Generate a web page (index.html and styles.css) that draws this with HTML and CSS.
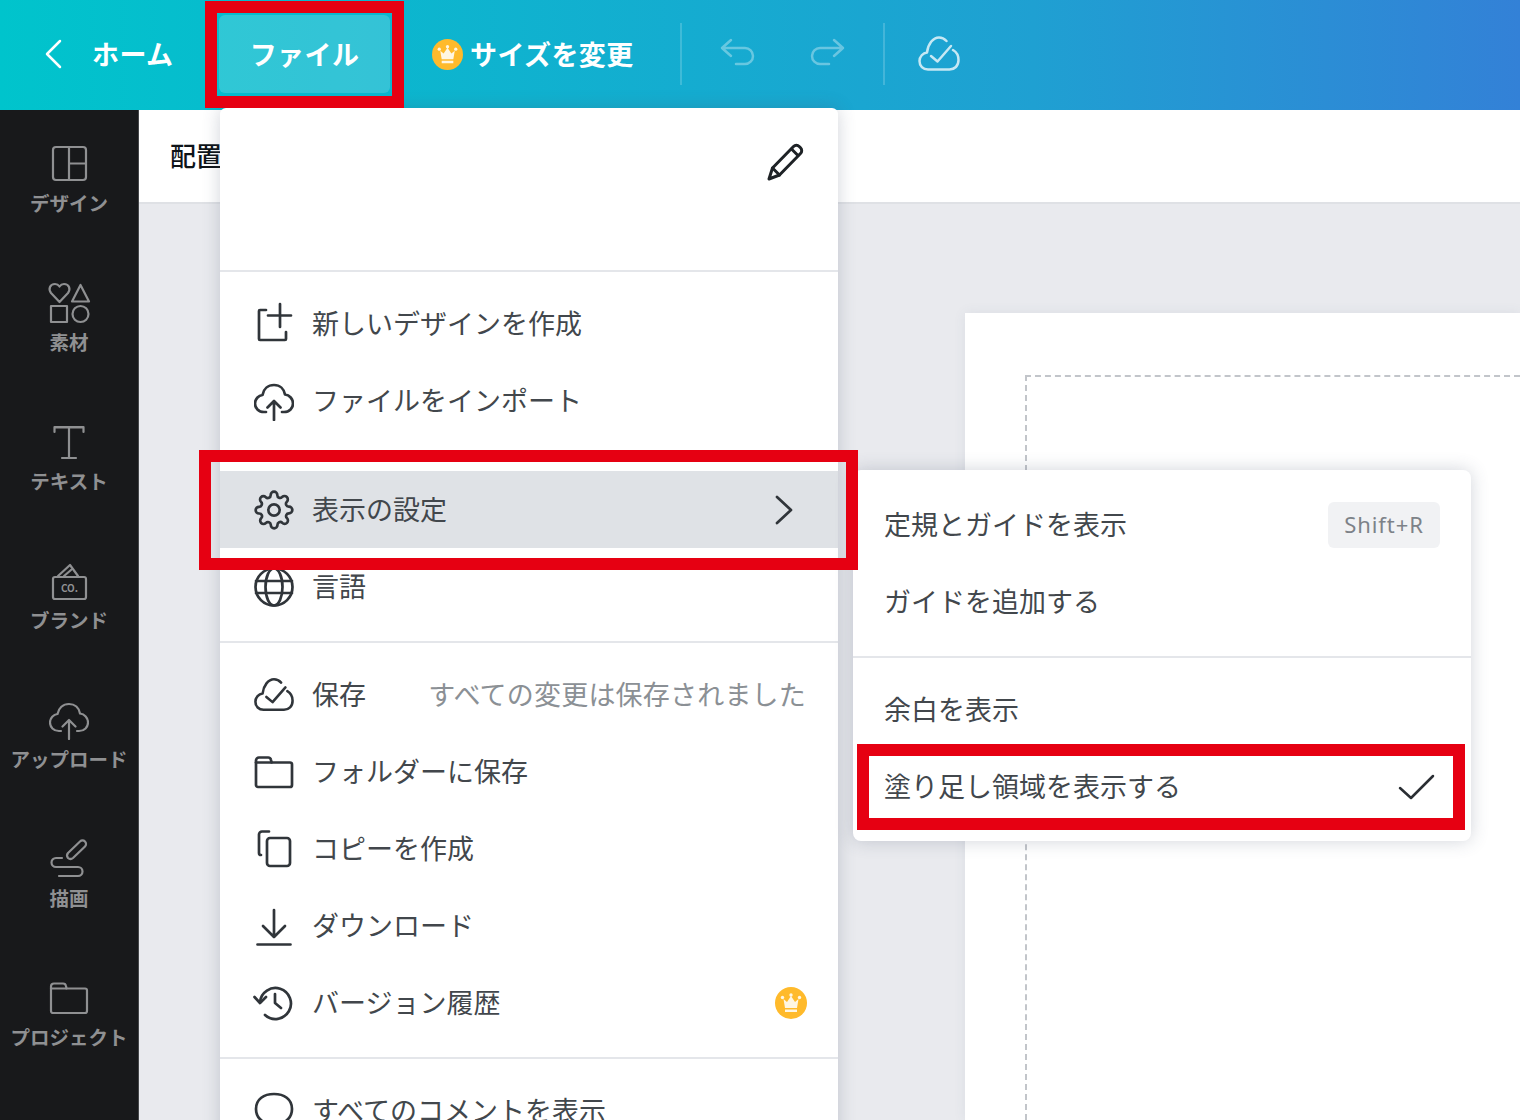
FILE: index.html
```html
<!DOCTYPE html>
<html lang="ja">
<head>
    <meta charset="UTF-8">
    <title>ファイル - 表示の設定</title>
    <link rel="stylesheet" href="styles.css">
</head>
<body>
<svg class="defs" width="0" height="0">
    <symbol id="i-upload" viewBox="0 0 40 40">
        <path d="M12 31H10C4.500 31 1 27 1 22.500C1 18 4.500 14.500 8.500 14C9.500 8 14 4 20 4C26 4 30 8 31 13.500C35.500 14 39 18 39 22.500C39 27 35.500 31 30 31H28"/>
        <path d="M20 39V20M13.500 26.500L20 20L26.500 26.500"/>
    </symbol>
    <symbol id="i-folder" viewBox="0 0 40 40">
        <path d="M2 8.500a3 3 0 0 1 3-3h9a3 3 0 0 1 3 2.500l.5 2.500H36a2 2 0 0 1 2 2V33a2 2 0 0 1-2 2H4a2 2 0 0 1-2-2z"/>
        <path d="M2 10.500h15.500"/>
    </symbol>
    <symbol id="i-cloud" viewBox="0 0 42 40">
        <path d="M28.500 7C26.500 4.800 24 3.500 21 3.500C15 3.500 10 10 9 18.500C5 19 1.500 22.500 1.500 27C1.500 32 5 35.500 10 35.500H31.500C36.500 35.500 40.500 32 40.500 26C40.500 21.500 38.500 18 35 16"/>
        <path d="M13 22L19.500 27.500L33 12"/>
    </symbol>
    <symbol id="i-crown" viewBox="0 0 32 32">
        <circle class="crown-bg" cx="16" cy="16" r="16"/>
        <path class="crown-fg" d="M8.500 12L12 15L16 9L20 15L23.500 12L22 21H10zM10 22.500H22V25H10z"/>
        <circle class="crown-fg" cx="7.500" cy="10.500" r="1.700"/>
        <circle class="crown-fg" cx="16" cy="8" r="1.700"/>
        <circle class="crown-fg" cx="24.500" cy="10.500" r="1.700"/>
    </symbol>
</svg>

<div class="app">
    <header class="topbar">
        <svg class="ico back" viewBox="0 0 40 40"><path d="M26 7L13 20L26 33"/></svg>
        <span class="home">ホーム</span>
        <button class="file-btn">ファイル</button>
        <svg class="crown resize-crown"><use href="#i-crown"/></svg>
        <span class="resize">サイズを変更</span>
        <span class="vline first"></span>
        <svg class="ico dim undo" viewBox="0 0 40 40"><path d="M12 6L3 14L12 22M3 14H26a8 8 0 0 1 0 16H17"/></svg>
        <svg class="ico dim redo" viewBox="0 0 40 40"><path d="M28 6L37 14L28 22M37 14H14a8 8 0 0 0 0 16H23"/></svg>
        <span class="vline second"></span>
        <svg class="ico soft cloud"><use href="#i-cloud"/></svg>
    </header>

    <div class="body-row">
        <nav class="side">
            <div class="side-item">
                <svg class="ico" viewBox="0 0 40 40"><rect x="4" y="3" width="33" height="33" rx="3"/><path d="M20 3V36M20 19.500H37"/></svg>
                <span>デザイン</span>
            </div>
            <div class="side-item">
                <svg class="ico" viewBox="0 0 40 40">
                    <path d="M10.500 19L2 10C-1 6 1 1 6 1C8 1 9.500 2 10.500 3.500C11.500 2 13 1 15 1C20 1 22 6 19 10z"/>
                    <path d="M31.500 2L40 18.500H23z"/>
                    <rect x="2" y="23" width="16" height="16"/>
                    <circle cx="31.500" cy="31" r="8"/>
                </svg>
                <span>素材</span>
            </div>
            <div class="side-item">
                <svg class="ico" viewBox="0 0 40 40"><path d="M5.500 10V5H34.500V10M5.500 5.500H34.500M20 5V36M13 36H27"/></svg>
                <span>テキスト</span>
            </div>
            <div class="side-item">
                <svg class="ico" viewBox="0 0 40 40">
                    <path d="M9 15L21 4L29 15M15 15L22 9"/>
                    <rect x="4" y="16" width="33" height="22" rx="2"/>
                    <text class="co" x="20.500" y="31">CO.</text>
                </svg>
                <span>ブランド</span>
            </div>
            <div class="side-item">
                <svg class="ico"><use href="#i-upload"/></svg>
                <span>アップロード</span>
            </div>
            <div class="side-item">
                <svg class="ico" viewBox="0 0 40 40">
                    <path d="M19 14L31 2.500a3.500 3.500 0 0 1 5 5L24 19a4 4 0 0 1-5 0a4 4 0 0 1 0-5z"/>
                    <path d="M13 19H7a4 4 0 0 0 0 9H29a4 4 0 0 1 0 9H10"/>
                </svg>
                <span>描画</span>
            </div>
            <div class="side-item">
                <svg class="ico"><use href="#i-folder"/></svg>
                <span>プロジェクト</span>
            </div>
        </nav>

        <main class="main">
            <div class="toolbar">配置</div>
            <div class="canvas">
                <div class="page"><div class="guide"></div></div>
            </div>
        </main>
    </div>

    <!-- ファイルメニュー -->
    <div class="menu">
        <div class="menu-head">
            <svg class="ico dark pencil" viewBox="0 0 40 40">
                <path d="M3 38L6.500 27L27.500 5.500a4 4 0 0 1 5.700 0l1.300 1.300a4 4 0 0 1 0 5.700L13.500 34z"/>
                <path d="M6.500 27L13.500 34M25.500 8L32 14.500"/>
            </svg>
        </div>
        <div class="section">
            <div class="row">
                <svg class="ico" viewBox="0 0 40 40"><path d="M12 6H6a1 1 0 0 0-1 1V35a1 1 0 0 0 1 1H31a1 1 0 0 0 1-1V28M26 0V23M14 11.500H37"/></svg>
                <span>新しいデザインを作成</span>
            </div>
            <div class="row">
                <svg class="ico"><use href="#i-upload"/></svg>
                <span>ファイルをインポート</span>
            </div>
            <div class="row active gap-top">
                <svg class="ico" viewBox="0 0 24 24">
                    <circle cx="12" cy="12" r="3.400" class="thin"/>
                    <path class="thin" d="M19.400 15a1.650 1.650 0 0 0 .33 1.820l.06.06a2 2 0 0 1 0 2.830 2 2 0 0 1-2.830 0l-.06-.06a1.650 1.650 0 0 0-1.820-.33 1.650 1.650 0 0 0-1 1.510V21a2 2 0 0 1-2 2 2 2 0 0 1-2-2v-.09A1.650 1.650 0 0 0 9 19.400a1.650 1.650 0 0 0-1.820.33l-.06.06a2 2 0 0 1-2.830 0 2 2 0 0 1 0-2.830l.06-.06a1.650 1.650 0 0 0 .33-1.820 1.650 1.650 0 0 0-1.510-1H3a2 2 0 0 1-2-2 2 2 0 0 1 2-2h.09A1.650 1.650 0 0 0 4.600 9a1.650 1.650 0 0 0-.33-1.820l-.06-.06a2 2 0 0 1 0-2.830 2 2 0 0 1 2.830 0l.06.06a1.650 1.650 0 0 0 1.820.33H9a1.650 1.650 0 0 0 1-1.510V3a2 2 0 0 1 2-2 2 2 0 0 1 2 2v.09a1.650 1.650 0 0 0 1 1.510 1.650 1.650 0 0 0 1.820-.33l.06-.06a2 2 0 0 1 2.830 0 2 2 0 0 1 0 2.830l-.06.06a1.650 1.650 0 0 0-.33 1.820V9a1.650 1.650 0 0 0 1.510 1H21a2 2 0 0 1 2 2 2 2 0 0 1-2 2h-.09a1.650 1.650 0 0 0-1.510 1z"/>
                </svg>
                <span>表示の設定</span>
                <svg class="ico dark end chev" viewBox="0 0 40 40"><path d="M12 7L26 20L12 33"/></svg>
            </div>
            <div class="row">
                <svg class="ico" viewBox="0 0 40 40">
                    <circle cx="20" cy="20" r="18.500"/>
                    <ellipse cx="20" cy="20" rx="8.500" ry="18.500"/>
                    <path d="M2 14H38M2 26H38"/>
                </svg>
                <span>言語</span>
            </div>
        </div>
        <div class="section">
            <div class="row">
                <svg class="ico"><use href="#i-cloud"/></svg>
                <span>保存</span>
                <span class="end status">すべての変更は保存されました</span>
            </div>
            <div class="row">
                <svg class="ico"><use href="#i-folder"/></svg>
                <span>フォルダーに保存</span>
            </div>
            <div class="row">
                <svg class="ico" viewBox="0 0 40 40">
                    <path d="M15 2.500H8a3 3 0 0 0-3 3V24a2 2 0 0 0 2 2"/>
                    <rect x="13" y="9" width="23" height="28" rx="3"/>
                </svg>
                <span>コピーを作成</span>
            </div>
            <div class="row">
                <svg class="ico" viewBox="0 0 40 40"><path d="M20 4V31M9 20L20 31L31 20M3.500 38.500H36.500"/></svg>
                <span>ダウンロード</span>
            </div>
            <div class="row">
                <svg class="ico" viewBox="0 0 40 40">
                    <path d="M6 19a15.500 15.500 0 1 1 5 13"/>
                    <path d="M0.500 14L6 20L12 14M21 11V20L27 25"/>
                </svg>
                <span>バージョン履歴</span>
                <svg class="crown end row-crown"><use href="#i-crown"/></svg>
            </div>
        </div>
        <div class="section last">
            <div class="row">
                <svg class="ico" viewBox="0 0 40 40"><path d="M20 3C10 3 2 8 2 18C2 28 10 33 20 33C30 33 38 28 38 18C38 8 30 3 20 3z"/></svg>
                <span>すべてのコメントを表示</span>
            </div>
        </div>
    </div>

    <!-- サブメニュー -->
    <div class="submenu">
        <div class="section">
            <div class="row">
                <span>定規とガイドを表示</span>
                <span class="end key">Shift+R</span>
            </div>
            <div class="row"><span>ガイドを追加する</span></div>
        </div>
        <div class="section last">
            <div class="row"><span>余白を表示</span></div>
            <div class="row">
                <span>塗り足し領域を表示する</span>
                <svg class="ico dark end check" viewBox="0 0 40 40"><path d="M4 21L15 31L37 9"/></svg>
            </div>
        </div>
    </div>

    <!-- 赤枠 -->
    <div class="mark mark-file"></div>
    <div class="mark mark-view"></div>
    <div class="mark mark-bleed"></div>
</div>
</body>
</html>
```

FILE: styles.css
```css
*{
    margin: 0;
    padding: 0;
    box-sizing: border-box;
}
body{
    font-family: "Noto Sans CJK JP", "Noto Sans", sans-serif;
    color: #42474c;
}
.defs{
    position: absolute;
}
.app{
    position: relative;
    width: 1520px;
    height: 1120px;
    overflow: hidden;
}

/*アイコン共通*/
.ico{
    width: 40px;
    height: 40px;
    flex: none;
    fill: none;
    stroke: currentColor;
    stroke-width: 2.500;
    stroke-linecap: round;
    stroke-linejoin: round;
    overflow: visible;
}
.ico .thin{
    stroke-width: 1.500;
}
.crown{
    width: 32px;
    height: 32px;
    flex: none;
}
.crown-bg{
    fill: #ffba2b;
}
.crown-fg{
    fill: #fff6e2;
}

/*上部バー*/
.topbar{
    height: 110px;
    padding-bottom: 2px;
    display: flex;
    align-items: center;
    background: linear-gradient(90deg, #00c4cc 0%, #1fa0d2 68%, #3381d7 100%);
    color: #fff;
    font-size: 27px;
    font-weight: 700;
    letter-spacing: .4px;
    white-space: nowrap;
}
.topbar span, .file-btn{
    padding-bottom: 2px;
}
.back{
    margin-left: 34px;
}
.home{
    margin-left: 18px;
    width: 82px;
}
.file-btn{
    margin-left: 45px;
    width: 171px;
    height: 78px;
    border: 0;
    border-radius: 6px;
    background: rgba(255, 255, 255, .17);
    color: #fff;
    font: inherit;
    letter-spacing: inherit;
}
.resize-crown{
    margin-left: 42px;
    width: 31px;
    height: 31px;
}
.resize{
    margin-left: 7px;
}
.vline{
    width: 2px;
    height: 62px;
    padding: 0;
    background: rgba(255, 255, 255, .18);
}
.vline.first{
    margin-left: 46px;
}
.vline.second{
    margin-left: 37px;
}
.dim{
    color: rgba(255, 255, 255, .35);
}
.soft{
    color: rgba(255, 255, 255, .75);
}
.undo{
    margin-left: 37px;
}
.redo{
    margin-left: 47px;
}
.cloud{
    margin-left: 33px;
    width: 42px;
}

/*左サイドバー*/
.body-row{
    display: flex;
    height: 1010px;
}
.side{
    width: 139px;
    flex: none;
    background: #18191b;
    border-right: 1px solid #45474a;
    color: #8f9092;
}
.side-item{
    height: 139px;
    padding-top: 34px;
    display: flex;
    flex-direction: column;
    align-items: center;
    gap: 7px;
    font-size: 19.500px;
    font-weight: 700;
    line-height: 24px;
    white-space: nowrap;
}
.side .ico{
    stroke-width: 2.200;
}
.co{
    fill: currentColor;
    stroke: none;
    font-size: 10px;
    font-weight: 700;
    text-anchor: middle;
}

/*メイン*/
.main{
    flex: 1;
    display: flex;
    flex-direction: column;
    min-width: 0;
}
.toolbar{
    height: 94px;
    padding: 0 0 4px 31px;
    display: flex;
    align-items: center;
    flex: none;
    background: #fff;
    border-bottom: 2px solid #dfe1e5;
    color: #0e1318;
    font-size: 26px;
    font-weight: 500;
}
.canvas{
    flex: 1;
    padding: 109px 0 0 826px;
    display: flex;
    background: #e9eaee;
}
.page{
    flex: 1;
    padding: 62px 0 0 60px;
    display: flex;
    background: #fff;
    box-shadow: 0 0 12px rgba(64, 87, 109, .08);
}
.guide{
    flex: 1;
    border-top: 2px dashed #c2c5ca;
    border-left: 2px dashed #c2c5ca;
}

/*メニュー*/
.menu, .submenu{
    position: absolute;
    width: 618px;
    background: #fff;
    font-size: 27px;
    box-shadow: 0 0 18px rgba(64, 76, 100, .24);
}
.menu{
    left: 220px;
    top: 108px;
    border-radius: 6px 6px 0 0;
}
.menu .ico{
    color: #30353a;
    stroke-width: 2.700;
}
.menu .ico .thin{
    stroke-width: 1.600;
}
.submenu{
    left: 853px;
    top: 470px;
    height: 371px;
    border-radius: 8px;
}
.menu-head{
    height: 164px;
    padding: 33px 32px 0 0;
    display: flex;
    justify-content: flex-end;
    align-items: flex-start;
    border-bottom: 2px solid #e4e6ea;
}
.menu .pencil{
    color: #1e2226;
    stroke-width: 3;
}
.section{
    padding: 13px 0 16px;
    border-bottom: 2px solid #e4e6ea;
}
.submenu .section:first-child{
    padding-top: 16px;
}
.section.last{
    border-bottom: 0;
}
.row{
    height: 77px;
    padding: 0 32px 0 34px;
    display: flex;
    align-items: center;
    gap: 18px;
    white-space: nowrap;
}
.row > span{
    padding-bottom: 2px;
}
.submenu .row{
    padding: 0 31px;
}
.row.active{
    background: #dfe2e6;
}
.gap-top{
    margin-top: 32px;
}
.end{
    margin-left: auto;
}
.dark{
    color: #2a2e33;
}
.status{
    color: #8b9095;
    letter-spacing: .2px;
}
.menu .chev{
    margin-right: 1px;
}
.row-crown{
    margin-right: -1px;
}
.key{
    width: 112px;
    height: 46px;
    display: flex;
    align-items: center;
    justify-content: center;
    border-radius: 6px;
    background: #f1f2f4;
    color: #7d8288;
    font-family: "Noto Sans", sans-serif;
    font-size: 22px;
    letter-spacing: .9px;
}
.check{
    margin-right: 4px;
}

/*赤枠*/
.mark{
    position: absolute;
    border: 12px solid #e60012;
}
.mark-file{
    left: 205px;
    top: 1px;
    width: 199px;
    height: 107px;
}
.mark-view{
    left: 199px;
    top: 450px;
    width: 659px;
    height: 120px;
}
.mark-bleed{
    left: 857px;
    top: 744px;
    width: 608px;
    height: 86px;
}
```
